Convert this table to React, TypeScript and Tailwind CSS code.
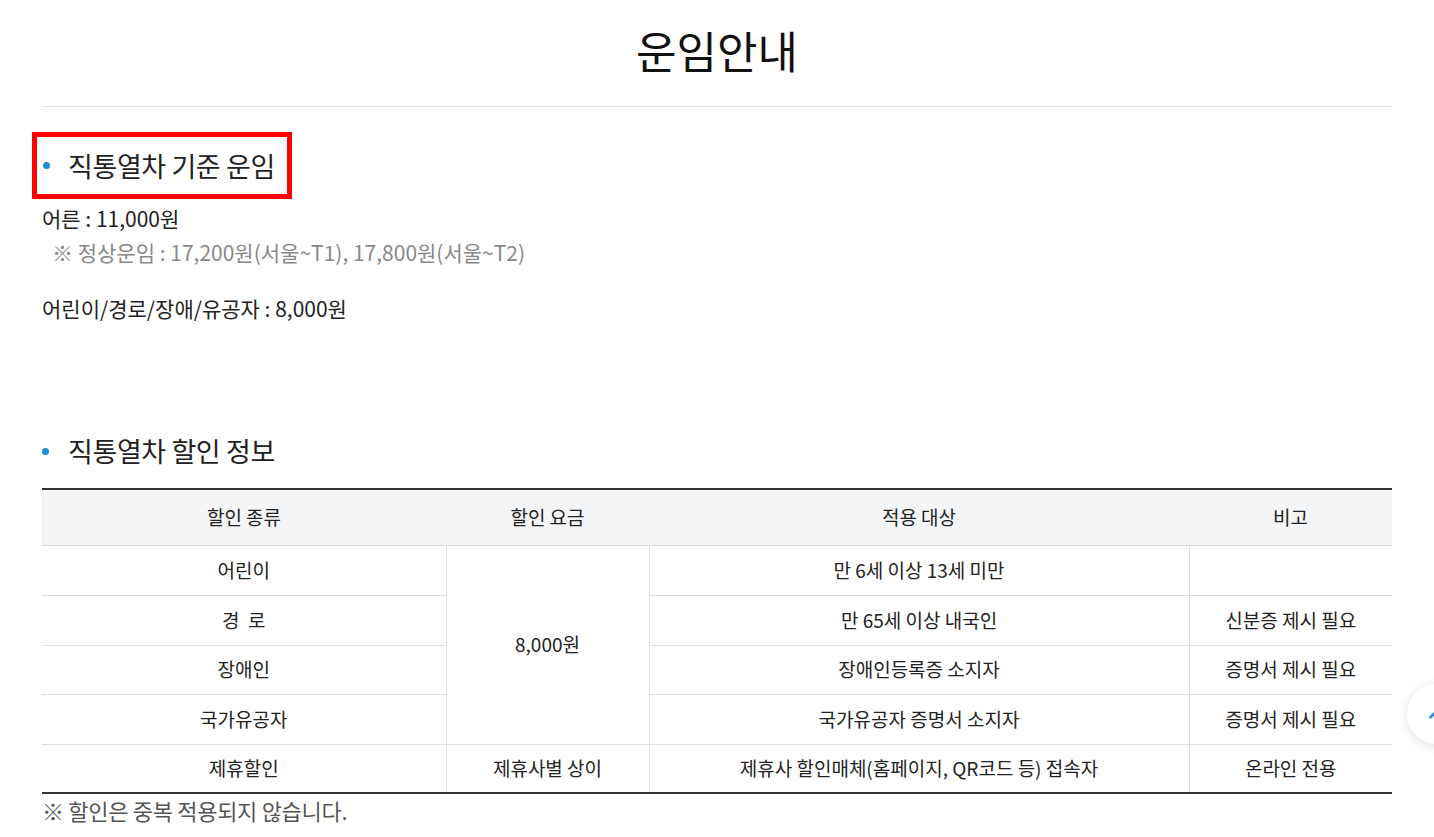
import { ChevronUp } from "lucide-react";

const font = "font-['Noto_Sans_CJK_KR','Noto_Sans',sans-serif]";

const rows = [
  { kind: "어린이", target: "만 6세 이상 13세 미만", note: "", h: "h-[50px]" },
  { kind: "경  로", target: "만 65세 이상 내국인", note: "신분증 제시 필요", h: "h-[50px]" },
  { kind: "장애인", target: "장애인등록증 소지자", note: "증명서 제시 필요", h: "h-[49px]" },
  { kind: "국가유공자", target: "국가유공자 증명서 소지자", note: "증명서 제시 필요", h: "h-[50px]" },
];

function Dot() {
  return <span className="block shrink-0 w-[7px] h-[7px] rounded-full bg-[#1a8fd6]" />;
}

export default function App() {
  const cell = "border-b border-[#dcdfe3] text-center p-0";
  return (
    <div className={`min-h-screen bg-white text-[#222] ${font}`}>
      <div className="mx-[42px] pt-[20px]">
        <h1 className="text-center text-[44px] leading-[60px] text-[#111] whitespace-nowrap">
          운임안내
        </h1>
        <div className="mt-[26px] border-t border-[#e2e2e2]" />

        {/* 기준 운임 */}
        <div className="mt-[25px] -ml-[10px] inline-flex items-center h-[67px] w-[260px] border-[5px] border-[#f00] pl-[6px]">
          <Dot />
          <h2 className="ml-[18px] text-[27px] leading-[30px] tracking-[-0.4px] whitespace-nowrap">
            직통열차 기준 운임
          </h2>
        </div>
        <div className="mt-[2px] text-[21px] leading-[34px]">
          <p>어른 : 11,000원</p>
          <p className="pl-[10px] text-[#888]">
            ※ 정상운임 : 17,200원(서울~T1), 17,800원(서울~T2)
          </p>
          <p className="mt-[22px]">어린이/경로/장애/유공자 : 8,000원</p>
        </div>

        {/* 할인 정보 */}
        <div className="mt-[111px] flex items-center h-[30px]">
          <Dot />
          <h2 className="ml-[19px] text-[27px] leading-[30px] tracking-[-0.4px] whitespace-nowrap">
            직통열차 할인 정보
          </h2>
        </div>

        <table className="mt-[22px] w-full border-collapse text-[19px] border-t-2 border-b-2 border-t-[#333] border-b-[#333]">
          <colgroup>
            <col className="w-[404px]" />
            <col className="w-[203px]" />
            <col className="w-[540px]" />
            <col className="w-[203px]" />
          </colgroup>
          <thead>
            <tr className="bg-[#f4f5f7]">
              <th className="font-normal h-[56px] border-b border-[#d4d8dc]">할인 종류</th>
              <th className="font-normal h-[56px] border-b border-[#d4d8dc]">할인 요금</th>
              <th className="font-normal h-[56px] border-b border-[#d4d8dc]">적용 대상</th>
              <th className="font-normal h-[56px] border-b border-[#d4d8dc]">비고</th>
            </tr>
          </thead>
          <tbody>
            {rows.map((r, i) => (
              <tr key={i} className={r.h}>
                <td className={`${cell} whitespace-pre`}>{r.kind}</td>
                {i === 0 && (
                  <td rowSpan={4} className={`${cell} border-l border-r`}>
                    8,000원
                  </td>
                )}
                <td className={`${cell} border-r`}>{r.target}</td>
                <td className={cell}>{r.note}</td>
              </tr>
            ))}
            <tr className="h-[49px]">
              <td className={`${cell} border-b-0`}>제휴할인</td>
              <td className={`${cell} border-b-0 border-l border-r`}>제휴사별 상이</td>
              <td className={`${cell} border-b-0 border-r`}>
                제휴사 할인매체(홈페이지, QR코드 등) 접속자
              </td>
              <td className={`${cell} border-b-0`}>온라인 전용</td>
            </tr>
          </tbody>
        </table>
        <p className="mt-[1px] text-[22px] leading-[30px] tracking-[-0.3px] text-[#555]">
          ※ 할인은 중복 적용되지 않습니다.
        </p>
      </div>

      <button className="fixed left-[1407px] top-[684px] w-[60px] h-[60px] rounded-full bg-white shadow-[0_2px_12px_rgba(0,0,0,0.12)] flex items-center justify-center text-[#2d8fe3]">
        <ChevronUp className="w-[26px] h-[26px]" strokeWidth={2.5} />
      </button>
    </div>
  );
}
